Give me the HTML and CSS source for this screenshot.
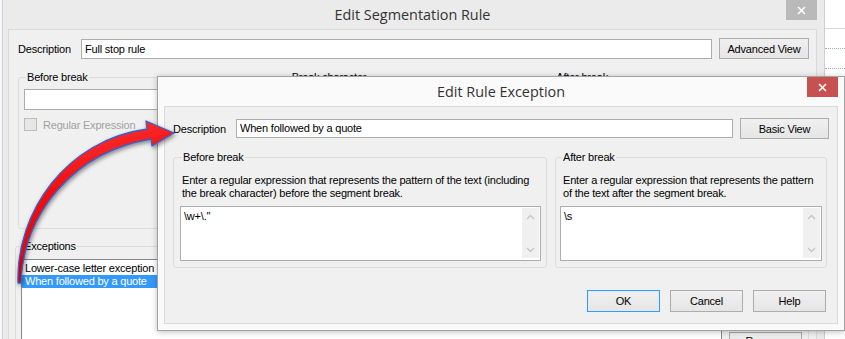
FILE: index.html
```html
<!DOCTYPE html>
<html lang="en">
<head>
    <meta charset="UTF-8">
    <meta name="viewport" content="width=device-width, initial-scale=1.0">
    <title>Edit Segmentation Rule</title>
    <link rel="stylesheet" href="styles.css">
</head>
<body>
    <div class="desktop">
        <!-- window behind, only its right edge shows -->
        <div class="sheet">
            <div class="sheet-row"></div>
            <div class="sheet-row dotted"></div>
            <div class="sheet-row dotted"></div>
        </div>

        <div class="window rule-window">
            <div class="titlebar">
                <span class="title">Edit Segmentation Rule</span>
                <span class="close">
                    <svg width="9" height="9" viewBox="0 0 9 9"><path d="M1 1L8 8M8 1L1 8" stroke="#fff" stroke-width="1.6"/></svg>
                </span>
            </div>
            <div class="client">
                <div class="desc-row">
                    <span class="label">Description</span>
                    <div class="textbox">Full stop rule</div>
                    <button class="btn">Advanced View</button>
                </div>

                <div class="groups">
                    <fieldset class="group">
                        <legend>Before break</legend>
                        <div class="textbox"></div>
                        <div class="check disabled"><span class="box"></span>Regular Expression</div>
                    </fieldset>
                    <fieldset class="group">
                        <legend>Break character</legend>
                        <div class="textbox"></div>
                    </fieldset>
                    <fieldset class="group">
                        <legend>After break</legend>
                        <div class="textbox"></div>
                    </fieldset>
                </div>

                <fieldset class="group exceptions">
                    <legend>Exceptions</legend>
                    <div class="exc-body">
                        <ul class="listbox">
                            <li>Lower-case letter exception</li>
                            <li class="selected">When followed by a quote</li>
                        </ul>
                        <div class="side-buttons">
                            <button class="btn">Add</button>
                            <button class="btn">Edit</button>
                            <button class="btn">Remove</button>
                        </div>
                    </div>
                </fieldset>
            </div>
        </div>

        <div class="window exception-window">
            <div class="titlebar">
                <span class="title">Edit Rule Exception</span>
                <span class="close active">
                    <svg width="9" height="9" viewBox="0 0 9 9"><path d="M1 1L8 8M8 1L1 8" stroke="#fff" stroke-width="1.6"/></svg>
                </span>
            </div>
            <div class="client">
                <div class="desc-row">
                    <span class="label">Description</span>
                    <div class="textbox">When followed by a quote</div>
                    <button class="btn">Basic View</button>
                </div>

                <div class="pattern-groups">
                    <fieldset class="group pattern before">
                        <legend>Before break</legend>
                        <p class="hint">Enter a regular expression that represents the pattern of the text (including the break character) before the segment break.</p>
                        <div class="memo">
                            <span class="memo-text">\w+\."</span>
                            <span class="vscroll">
                                <svg width="9" height="6" viewBox="0 0 9 6"><path d="M1 5L4.5 1.5L8 5" fill="none" stroke="#c4c4c4" stroke-width="1.3"/></svg>
                                <svg width="9" height="6" viewBox="0 0 9 6"><path d="M1 1L4.5 4.5L8 1" fill="none" stroke="#c4c4c4" stroke-width="1.3"/></svg>
                            </span>
                        </div>
                    </fieldset>
                    <fieldset class="group pattern after">
                        <legend>After break</legend>
                        <p class="hint">Enter a regular expression that represents the pattern of the text after the segment break.</p>
                        <div class="memo">
                            <span class="memo-text">\s</span>
                            <span class="vscroll">
                                <svg width="9" height="6" viewBox="0 0 9 6"><path d="M1 5L4.5 1.5L8 5" fill="none" stroke="#c4c4c4" stroke-width="1.3"/></svg>
                                <svg width="9" height="6" viewBox="0 0 9 6"><path d="M1 1L4.5 4.5L8 1" fill="none" stroke="#c4c4c4" stroke-width="1.3"/></svg>
                            </span>
                        </div>
                    </fieldset>
                </div>

                <div class="dialog-buttons">
                    <button class="btn default">OK</button>
                    <button class="btn">Cancel</button>
                    <button class="btn">Help</button>
                </div>
            </div>
        </div>

        <!-- red callout arrow drawn over both windows -->
        <svg class="arrow" width="845" height="339" viewBox="0 0 845 339">
            <defs>
                <linearGradient id="redFill" x1="0" y1="0" x2="0.3" y2="1">
                    <stop offset="0" stop-color="#ff4a4a"/>
                    <stop offset="0.45" stop-color="#f01010"/>
                    <stop offset="1" stop-color="#c80000"/>
                </linearGradient>
                <filter id="arrowShadow" x="-20%" y="-20%" width="140%" height="140%">
                    <feDropShadow dx="1" dy="2" stdDeviation="2" flood-color="#000" flood-opacity="0.45"/>
                </filter>
            </defs>
            <path d="M18 283 C16 212 66 140 147 129 L146 121 L174 133 L152 146 L151 139 C74 152 24 212 21 283 Z"
                  fill="url(#redFill)" stroke="#3b5fc8" stroke-width="1.3" stroke-linejoin="round" filter="url(#arrowShadow)"/>
        </svg>
    </div>
</body>
</html>
```

FILE: styles.css
```css
* {
    box-sizing: border-box;
}
body {
    margin: 0;
    font-family: "Liberation Sans", Arial, sans-serif;
    font-size: 11px;
    letter-spacing: -0.2px;
    color: #000;
}
.desktop {
    position: relative;
    width: 845px;
    height: 339px;
    overflow: hidden;
    background: #f4f7fb;
}

/* window peeking out on the right */
.sheet {
    position: absolute;
    left: 824px;
    top: 0;
    width: 21px;
    height: 339px;
    background: #fff;
    border-left: 1px solid #d8d8d8;
    padding-top: 28px;
}
.sheet-row {
    height: 20px;
    border-top: 1px solid #dadada;
}
.sheet-row.dotted {
    border-top: 1px dotted #9fb0c6;
}

/* windows */
.window {
    position: absolute;
    display: flex;
    flex-direction: column;
}
.titlebar {
    display: grid;
    grid-template-columns: 1fr auto 1fr;
    height: 29px;
    flex-shrink: 0;
}
.title {
    grid-column: 2;
    font-family: "Open Sans", "Noto Sans", sans-serif;
    font-size: 14.4px;
    letter-spacing: 0;
    line-height: 29px;
    color: #333;
    white-space: nowrap;
}
.close {
    grid-column: 3;
    justify-self: end;
    width: 31px;
    height: 20px;
    display: flex;
    align-items: center;
    justify-content: center;
    background: #b9b9b9;
}
.close.active {
    background: #c75050;
}
.client {
    border: 1px solid #dadada;
    background: #f0f0f0;
    flex: 1;
}

.rule-window {
    left: 2px;
    top: 0;
    width: 823px;
    height: 420px;
    background: #ebebeb;
    border-left: 1px solid #cfcfcf;
    border-right: 1px solid #cfcfcf;
    padding: 0 7px 0 5px;
}
.rule-window .client {
    padding: 8px 7px 0 9px;
}

.exception-window {
    left: 157px;
    top: 76px;
    width: 688px;
    height: 255px;
    background: #fafafa;
    border: 1px solid #a3a3a3;
    box-shadow: 0 1px 6px rgba(0, 0, 0, 0.25);
    padding: 0 6px 6px 6px;
}
.exception-window .client {
    padding: 11px 8px 0 8px;
}

/* common controls */
.desc-row {
    display: grid;
    grid-template-columns: 56px 1fr 90px;
    column-gap: 7px;
    align-items: center;
}
.exception-window .desc-row {
    grid-template-columns: 56px 1fr 89px;
}
.label {
    white-space: nowrap;
}
.textbox {
    height: 20px;
    background: #fff;
    border: 1px solid #abadb3;
    padding: 0 3px;
    line-height: 18px;
    white-space: nowrap;
    overflow: hidden;
}
.exception-window .textbox {
    height: 19px;
    line-height: 17px;
}
.btn {
    font-family: "Liberation Sans", Arial, sans-serif;
    font-size: 11px;
    letter-spacing: -0.2px;
    color: #000;
    height: 21px;
    padding: 0;
    border: 1px solid #acacac;
    background: linear-gradient(#f0f0f0, #e5e5e5);
}
.btn.default {
    border-color: #3399ff;
    box-shadow: inset 0 0 0 1px #dcecfc;
}

.group {
    margin: 0;
    min-width: 0;
    border: 1px solid #dcdcdc;
    border-radius: 3px;
    padding: 5px 5px 5px 5px;
}
.group legend {
    padding: 0 1px;
    margin-left: 2px;
    line-height: 13px;
}

/* main window body */
.groups {
    display: grid;
    grid-template-columns: repeat(3, 1fr);
    column-gap: 3px;
    height: 158px;
    margin-top: 12px;
}
.groups .textbox {
    height: 21px;
}
.check {
    display: flex;
    align-items: center;
    gap: 6px;
    margin-top: 8px;
    height: 13px;
}
.check .box {
    width: 13px;
    height: 13px;
    border: 1px solid #bcbcbc;
    background: #e6e6e6;
}
.check.disabled {
    color: #a0a0a0;
}

.exceptions {
    margin: 11px 0 0 -3px;
    padding: 6px 6px 0 5px;
}
.exc-body {
    display: flex;
    gap: 7px;
}
.listbox {
    flex: 1;
    height: 140px;
    margin: 0;
    padding: 2px 0 0 0;
    list-style: none;
    background: #fff;
    border: 1px solid #828790;
}
.listbox li {
    line-height: 13px;
    padding-left: 3px;
}
.listbox li.selected {
    background: #3399ff;
    color: #fff;
}
.side-buttons {
    display: flex;
    flex-direction: column;
    gap: 15px;
    width: 73px;
    padding-top: 1px;
}
.side-buttons .btn {
    height: 21px;
    padding-bottom: 3px;
}

/* exception dialog body */
.pattern-groups {
    display: grid;
    grid-template-columns: 374px 1fr;
    column-gap: 8px;
    margin: 12px 2px 0 0;
}
.pattern {
    height: 117px;
    padding: 0 5px 5px 6px;
}
.pattern.after {
    padding: 0 4px 5px 4px;
}
.hint {
    margin: 10px 0 6px 2px;
    line-height: 13px;
}
.pattern.after .hint {
    margin-left: 3px;
}
.memo {
    display: flex;
    height: 55px;
    background: #fff;
    border: 1px solid #abadb3;
}
.memo-text {
    flex: 1;
    padding: 3px 3px;
    line-height: 13px;
}
.vscroll {
    width: 17px;
    margin: 1px 1px 2px 0;
    background: #f0f0f0;
    display: flex;
    flex-direction: column;
    justify-content: space-between;
    align-items: center;
    padding: 6px 0 5px;
}

.dialog-buttons {
    display: flex;
    justify-content: flex-end;
    gap: 10px;
    margin: 22px 3px 0 0;
}
.dialog-buttons .btn {
    width: 73px;
    height: 22px;
}

.arrow {
    position: absolute;
    left: 0;
    top: 0;
    pointer-events: none;
}
```
